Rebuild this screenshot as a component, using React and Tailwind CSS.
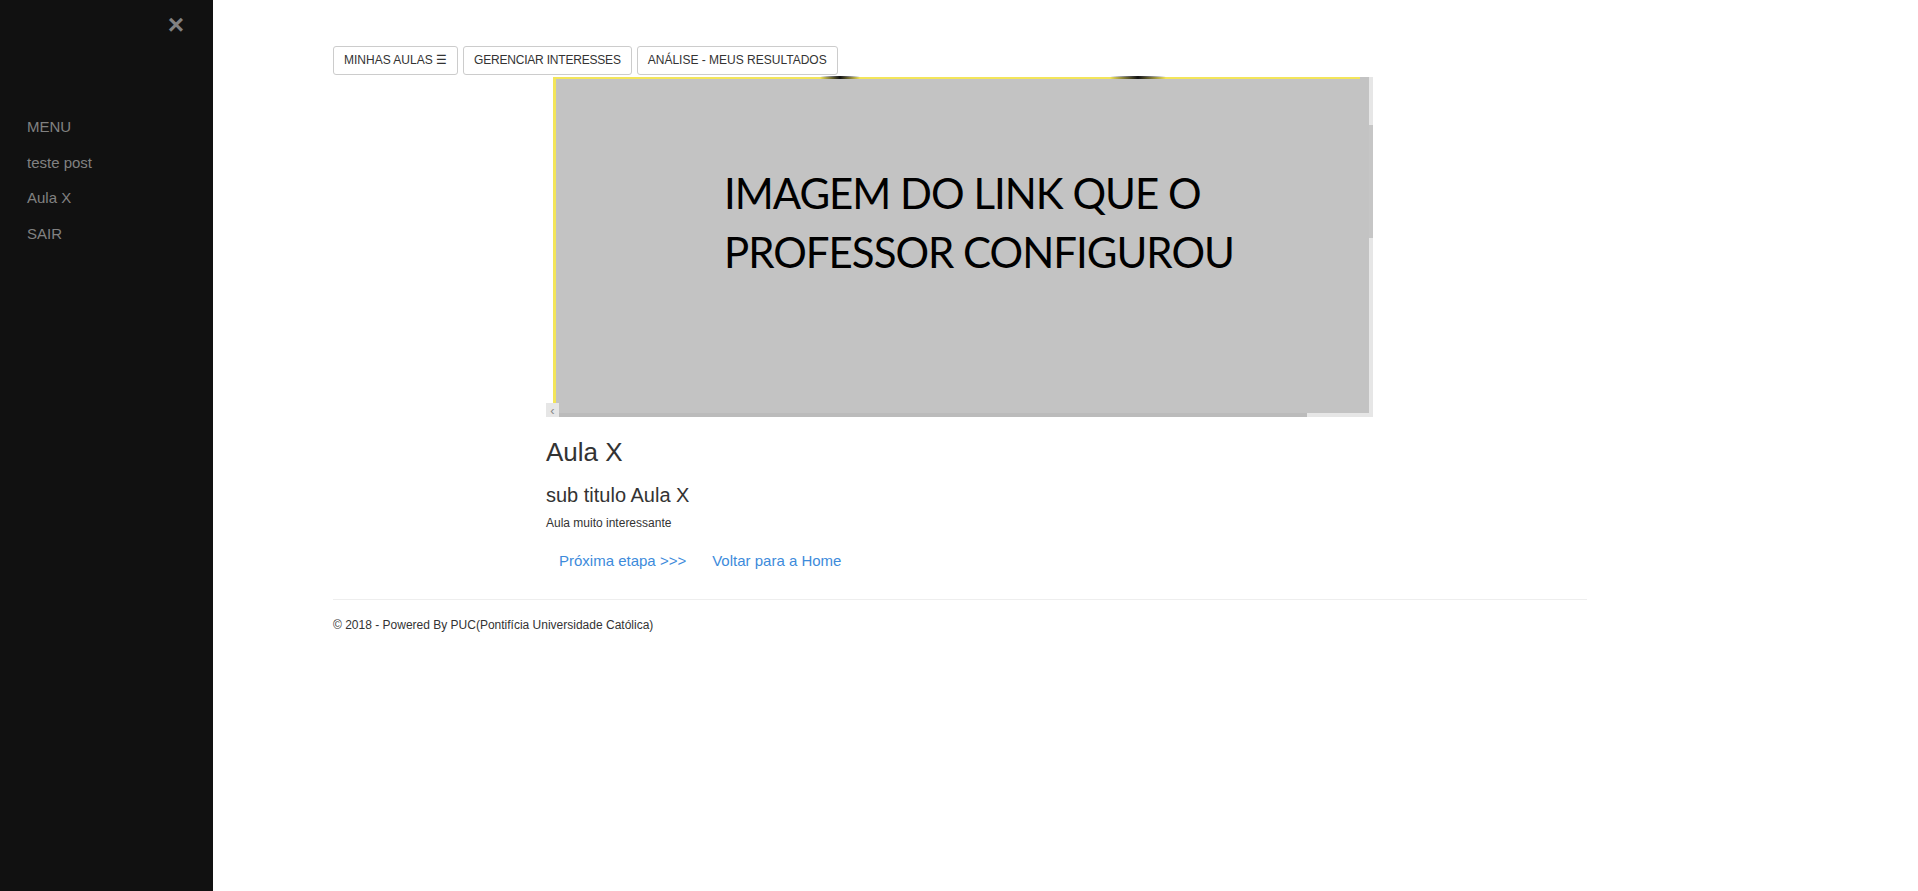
export default function App() {
  const menu = ["MENU", "teste post", "Aula X", "SAIR"];
  return (
    <div className="flex min-h-[891px] bg-white font-['Liberation_Sans',Arial,sans-serif] text-[#333]">
      <aside className="w-[213px] shrink-0 bg-[#111] min-h-[891px]">
        <div className="mt-[11px] pr-[29px] text-right text-[28px] font-bold leading-[28px] text-[#818181]">
          ×
        </div>
        <nav className="mt-[70px] flex flex-col">
          {menu.map((t) => (
            <a
              key={t}
              href="#"
              className="block py-2 pl-[27px] text-[15px] leading-[19.5px] text-[#818181]"
            >
              {t}
            </a>
          ))}
        </nav>
      </aside>

      <main className="flex-1 pl-[120px] pt-[46px]">
        <div className="w-[1254px]">
          <div className="flex gap-[5px]">
            <button className="rounded-[3px] border border-[#ccc] bg-white px-[10px] py-[5px] text-[12px] leading-[17px] text-[#333]">
              MINHAS AULAS ☰
            </button>
            <button className="rounded-[3px] border border-[#ccc] bg-white px-[10px] py-[5px] text-[12px] leading-[17px] tracking-[-0.2px] text-[#333]">
              GERENCIAR INTERESSES
            </button>
            <button className="rounded-[3px] border border-[#ccc] bg-white px-[10px] py-[5px] text-[12px] leading-[17px] text-[#333]">
              ANÁLISE - MEUS RESULTADOS
            </button>
          </div>

          <div className="ml-[213px] mt-[2px]">
            {/* embedded image frame */}
            <div className="relative h-[340px] w-[827px] bg-white">
              <div className="flex h-[336px]">
                <div className="w-[7px]" />
                <div className="relative flex w-[816px] flex-col border-l-[3px] border-[#f3e55a] bg-[#c3c3c3]">
                  <div className="flex h-[2px] shrink-0">
                    <div className="w-[804px] bg-[#f3e55a]" />
                    <div className="flex-1 bg-[#c3c3c3]" />
                  </div>
                  <div className="pl-[168px] pt-[85px] font-['Lato','Open_Sans',sans-serif] text-[42px] leading-[59px] tracking-[-1px] text-black">
                    <div>IMAGEM DO LINK QUE O</div>
                    <div>PROFESSOR CONFIGUROU</div>
                  </div>
                  <div className="absolute left-[264px] top-[-1px] h-[3px] w-[40px] rounded-full bg-linear-to-r from-transparent via-[#111] to-transparent" />
                  <div className="absolute left-[554px] top-[-1px] h-[3px] w-[56px] rounded-full bg-linear-to-r from-transparent via-[#111] to-transparent" />
                </div>
                <div className="flex w-[4px] flex-col bg-[#e6e6e6]">
                  <div className="h-[48px]" />
                  <div className="h-[113px] bg-[#c6c6c6]" />
                </div>
              </div>
              <div className="flex h-[4px]">
                <div className="w-[13px] bg-[#e6e6e6]" />
                <div className="w-[748px] bg-[#bbbbbb]" />
                <div className="flex-1 bg-[#e6e6e6]" />
              </div>
              <div className="absolute bottom-0 left-0 flex h-[14px] w-[13px] items-center justify-center bg-[#e6e6e6] text-[13px] leading-none text-[#888]">
                ‹
              </div>
            </div>

            <h2 className="mt-[21px] text-[26px] leading-[29px] text-[#333]">Aula X</h2>
            <h3 className="mt-[17px] text-[20px] leading-[22px] text-[#333]">sub titulo Aula X</h3>
            <p className="mt-[9px] text-[12px] leading-[17px] text-[#333]">Aula muito interessante</p>
            <div className="mt-[18px] flex gap-[26px] pl-[13px] text-[15px] leading-[21px] text-[#3d8bdb]">
              <a href="#">Próxima etapa &gt;&gt;&gt;</a>
              <a href="#">Voltar para a Home</a>
            </div>
          </div>

          <div className="mt-[28px] h-px bg-[#eee]" />
          <footer className="mt-[17px] text-[12px] leading-[17px] text-[#333]">
            © 2018 - Powered By PUC(Pontifícia Universidade Católica)
          </footer>
        </div>
      </main>
    </div>
  );
}
